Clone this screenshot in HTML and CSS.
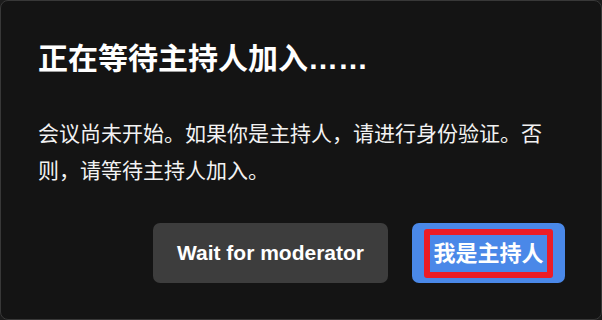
FILE: index.html
```html
<!DOCTYPE html>
<html lang="zh-CN">
<head>
<meta charset="utf-8">
<title>正在等待主持人加入</title>
<link rel="stylesheet" href="styles.css">
</head>
<body>
<div class="dialog">
  <h1 class="title">正在等待主持人加入……</h1>
  <p class="message">会议尚未开始。如果你是主持人，请进行身份验证。否则，请等待主持人加入。</p>
  <div class="actions">
    <button class="btn btn-secondary">Wait for moderator</button>
    <button class="btn btn-primary"><span class="focus-mark">我是主持人</span></button>
  </div>
</div>
</body>
</html>
```
FILE: styles.css
```css
html, body {
  margin: 0;
  padding: 0;
  background: #1c1c1c;
}
body {
  width: 602px;
  height: 320px;
  overflow: hidden;
  font-family: "Liberation Sans", "Noto Sans CJK SC", sans-serif;
  color: #ffffff;
}
.dialog {
  box-sizing: border-box;
  width: 602px;
  height: 320px;
  border: 1px solid #383838;
  border-radius: 8px;
  background: #141414;
  padding: 37px 36px 36px 37px;
  display: flex;
  flex-direction: column;
}
.title {
  margin: 0;
  font-size: 30px;
  line-height: 42px;
  font-weight: 700;
  color: #ffffff;
}
.message {
  margin: 35px 0 0 0;
  font-size: 21px;
  line-height: 37px;
  color: #f2f2f2;
  padding-right: 14px;
}
.actions {
  margin-top: auto;
  display: flex;
  justify-content: flex-end;
  gap: 24px;
}
.btn {
  height: 60px;
  border: none;
  border-radius: 7px;
  color: #ffffff;
  font-family: "Liberation Sans", "Noto Sans CJK SC", sans-serif;
  font-weight: 700;
  font-size: 21px;
  display: flex;
  align-items: center;
  justify-content: center;
}
.btn-secondary {
  background: #3d3d3d;
  width: 235px;
}
.btn-primary {
  background: #4a88e8;
  width: 153px;
  padding: 0;
}
.focus-mark {
  display: inline-block;
  border: 6px solid #ec1c26;
  border-radius: 3px;
  padding: 0 3px;
  font-size: 22px;
  line-height: 37px;
}
```
